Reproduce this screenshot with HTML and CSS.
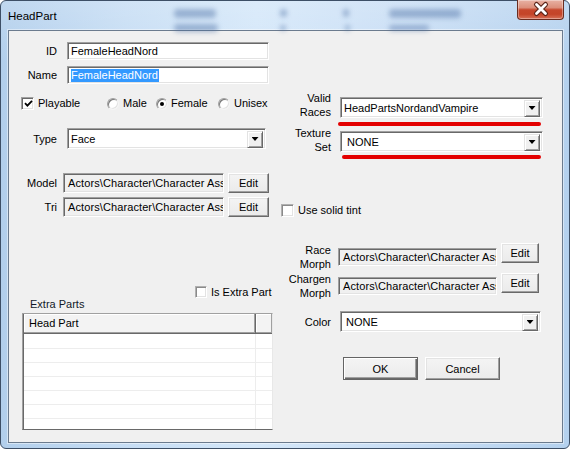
FILE: index.html
```html
<!DOCTYPE html>
<html>
<head>
<meta charset="utf-8">
<title>HeadPart</title>
<link rel="stylesheet" href="styles.css">
</head>
<body>
<div class="window">
  <div class="titlebar">
    <span class="title">HeadPart</span>
    <span class="smudge s1"></span>
    <span class="smudge s1b"></span>
    <span class="smudge s2"></span>
    <span class="smudge s2b"></span>
    <span class="smudge s3"></span>
    <span class="smudge s3b"></span>
    <span class="smudge s4"></span>
    <span class="smudge s4b"></span>
    <div class="close">
      <svg width="47" height="20" viewBox="0 0 47 20">
        <path d="M19.5 5.5 L28.5 14.5 M28.5 5.5 L19.5 14.5" stroke="#5a2418" stroke-width="5" stroke-linecap="round" fill="none"/>
        <path d="M19.5 5.5 L28.5 14.5 M28.5 5.5 L19.5 14.5" stroke="#ffffff" stroke-width="2.8" stroke-linecap="round" fill="none"/>
      </svg>
    </div>
  </div>
  <div class="client">
    <div class="band band-a">
      <div class="col-left">
        <div class="row r-id"><span class="lbl">ID</span><div class="field w-name">FemaleHeadNord</div></div>
        <div class="row r-name"><span class="lbl">Name</span><div class="field w-name"><span class="sel">FemaleHeadNord</span></div></div>
        <div class="row r-opts">
          <div class="opt o-play"><span class="chk"><svg width="9" height="9" viewBox="0 0 9 9"><path d="M1 4.2 L3.4 6.6 L8 1.8" stroke="#000" stroke-width="1.8" fill="none"/></svg></span>Playable</div>
          <div class="opt o-male"><span class="radio"></span>Male</div>
          <div class="opt o-female"><span class="radio on"></span>Female</div>
          <div class="opt o-unisex"><span class="radio"></span>Unisex</div>
        </div>
        <div class="row r-type"><span class="lbl">Type</span><div class="combo w-type"><span class="ctext">Face</span><span class="dd"></span></div></div>
      </div>
      <div class="col-right">
        <div class="row r-races"><span class="lbl2">Valid<br>Races</span><div class="combo w-races"><span class="ctext">HeadPartsNordandVampire</span><span class="dd"></span></div></div>
        <div class="redline rl1"></div>
        <div class="row r-tex"><span class="lbl2">Texture<br>Set</span><div class="combo w-races c-none"><span class="ctext">NONE</span><span class="dd"></span></div></div>
        <div class="redline rl2"></div>
      </div>
    </div>
    <div class="band band-b">
      <div class="row r-model"><span class="lbl lbl-m">Model</span><div class="field ro w-path"><span class="ptext">Actors\Character\Character Ass</span></div><button class="btn btn-edit">Edit</button></div>
      <div class="row r-tri"><span class="lbl lbl-m">Tri</span><div class="field ro w-path"><span class="ptext">Actors\Character\Character Ass</span></div><button class="btn btn-edit">Edit</button>
        <div class="opt o-tint"><span class="chk"></span>Use solid tint</div>
      </div>
    </div>
    <div class="band band-c">
      <div class="col-left">
        <div class="opt o-extra"><span class="chk"></span>Is Extra Part</div>
        <div class="extra-lbl">Extra Parts</div>
        <div class="list">
          <div class="list-head"><div class="hcol h1">Head Part</div><div class="hcol h2"></div></div>
          <div class="list-body"><div class="lc lc1"></div><div class="lc lc2"></div></div>
        </div>
      </div>
      <div class="col-right">
        <div class="row r-morph"><span class="lbl2 lbl-n">Race<br>Morph</span><div class="field ro w-morph"><span class="ptext">Actors\Character\Character Ass</span></div><button class="btn btn-sm">Edit</button></div>
        <div class="row r-morph r-charg"><span class="lbl2 lbl-n">Chargen<br>Morph</span><div class="field ro w-morph"><span class="ptext">Actors\Character\Character Ass</span></div><button class="btn btn-sm">Edit</button></div>
        <div class="row r-color"><span class="lbl2">Color</span><div class="combo w-color c-color"><span class="ctext">NONE</span><span class="dd"></span></div></div>
        <div class="row r-btns"><button class="btn btn-ok">OK</button><button class="btn btn-cancel">Cancel</button></div>
      </div>
    </div>
  </div>
</div>
</body>
</html>
```
FILE: styles.css
```css
* { box-sizing: border-box; }
html, body { margin: 0; padding: 0; width: 570px; height: 449px; overflow: hidden; }
body {
  font-family: "Liberation Sans", Arial, sans-serif;
  font-size: 11px;
  color: #000;
  background: #fff;
}

.window {
  width: 570px;
  height: 449px;
  display: flex;
  flex-direction: column;
  padding: 0 6px 5px 7px;
  border: 1px solid #3d4f66;
  border-radius: 6px;
  background:
    linear-gradient(180deg, rgba(255,255,255,0.18), rgba(255,255,255,0) 60px),
    linear-gradient(90deg, #b2cfec 0%, #c6ddf4 22%, #d4e7f9 45%, #c9def5 70%, #b4d1ee 100%);
}

.titlebar {
  position: relative;
  height: 29px;
  flex: none;
  display: flex;
  align-items: center;
}
.title { font-size: 11.5px; color: #000; position: relative; z-index: 2; }
.smudge {
  position: absolute;
  background: rgba(70, 105, 160, 0.42);
  filter: blur(2.5px);
  border-radius: 4px;
}
.s1 { left: 166px; top: 8px; width: 42px; height: 9px; }
.s1b { left: 166px; top: 23px; width: 44px; height: 8px; }
.s2 { left: 272px; top: 8px; width: 7px; height: 8px; }
.s2b { left: 272px; top: 24px; width: 6px; height: 6px; }
.s3 { left: 335px; top: 8px; width: 6px; height: 8px; }
.s3b { left: 337px; top: 24px; width: 5px; height: 6px; }
.s4 { left: 381px; top: 8px; width: 72px; height: 9px; }
.s4b { left: 381px; top: 24px; width: 40px; height: 6px; }

.close {
  position: absolute;
  right: -1px;
  top: -1px;
  width: 47px;
  height: 20px;
  border: 1px solid #6a2c1f;
  border-top: 0;
  border-radius: 0 0 4px 4px;
  background: linear-gradient(180deg, #e8b2a4 0%, #dc8f7b 40%, #c6472c 52%, #c44428 75%, #d77158 100%);
  box-shadow: inset 0 0 0 1px rgba(255,255,255,0.35);
}
.close svg { display: block; position: absolute; left: -1px; top: -1px; }

.client {
  flex: 1;
  border: 1px solid #6b7b8e;
  background: #f0f0f0;
  display: flex;
  flex-direction: column;
  box-shadow: 0 0 0 1px rgba(255,255,255,0.45);
}

.band { display: flex; align-items: flex-start; flex: none; }
.col-left { width: 275px; flex: none; display: flex; flex-direction: column; }
.col-right { width: 278px; flex: none; display: flex; flex-direction: column; }

.row { display: flex; align-items: center; flex: none; }

.lbl { width: 48px; text-align: right; margin-right: 10px; flex: none; }
.lbl-m { margin-right: 6px; }
.lbl2 { width: 47px; text-align: right; margin-right: 9px; line-height: 14px; flex: none; }
.lbl-n { margin-right: 7px; }

.field {
  height: 18px;
  background: #fff;
  border: 1px solid;
  border-color: #a0a0a0 #ffffff #ffffff #a0a0a0;
  box-shadow: inset 1px 1px 0 #696969, inset -1px -1px 0 #e3e3e3;
  padding-left: 3px;
  display: flex;
  align-items: center;
  white-space: nowrap;
  overflow: hidden;
  flex: none;
}
.field.ro { background: #f0f0f0; padding-left: 4px; height: 20px; }
.ptext { letter-spacing: 0.1px; }
.sel { background: #3399ff; color: #fff; line-height: 13px; padding: 0 1px 0 0; }

.w-name { width: 202px; }
.w-type { width: 199px; }
.w-races { width: 203px; }
.w-path { width: 161px; }
.w-morph { width: 159px; height: 18px !important; }
.w-color { width: 201px; }

.r-id { margin-top: 11px; height: 18px; }
.r-name { margin-top: 6px; height: 18px; }
.r-opts { margin-top: 13px; height: 13px; padding-left: 12px; }
.r-type { margin-top: 18px; height: 21px; }

.opt { display: flex; align-items: center; line-height: 13px; white-space: nowrap; flex: none; }
.o-play { width: 86px; }
.o-male { width: 49px; }
.o-female { width: 62px; }
.o-female .radio { margin-right: 3px; }

.chk {
  width: 13px;
  height: 13px;
  margin-right: 4px;
  background: #fff;
  border: 1px solid;
  border-color: #a0a0a0 #ffffff #ffffff #a0a0a0;
  box-shadow: inset 1px 1px 0 #696969, inset -1px -1px 0 #e3e3e3;
  display: flex;
  align-items: center;
  justify-content: center;
  flex: none;
}
.chk svg { display: block; margin-left: 1px; }
.radio {
  width: 12px;
  height: 12px;
  margin-right: 4px;
  border-radius: 50%;
  background: #fff;
  border: 1px solid;
  border-color: #a0a0a0 #f4f4f4 #f4f4f4 #a0a0a0;
  box-shadow: inset 1px 1px 0 #7a7a7a, inset -1px -1px 0 #e3e3e3;
  display: flex;
  align-items: center;
  justify-content: center;
  flex: none;
}
.radio.on::after {
  content: "";
  width: 4px;
  height: 4px;
  border-radius: 50%;
  background: #000;
}

.combo {
  height: 21px;
  background: #fff;
  border: 1px solid;
  border-color: #a0a0a0 #ffffff #ffffff #a0a0a0;
  box-shadow: inset 1px 1px 0 #696969, inset -1px -1px 0 #e3e3e3;
  padding: 0 2px 0 2px;
  display: flex;
  align-items: center;
  flex: none;
}
.ctext { padding-left: 1px; white-space: nowrap; }
.c-none .ctext { padding-left: 4px; }
.c-color .ctext { padding-left: 3px; }
.dd {
  margin-left: auto;
  width: 16px;
  height: 17px;
  margin-top: 1px;
  background: #f0f0f0;
  border: 1px solid;
  border-color: #e3e3e3 #696969 #696969 #e3e3e3;
  box-shadow: inset 1px 1px 0 #ffffff, inset -1px -1px 0 #a0a0a0;
  display: flex;
  align-items: center;
  justify-content: center;
  flex: none;
}
.dd::after {
  content: "";
  width: 7px;
  height: 4px;
  background: #000;
  clip-path: polygon(0 0, 100% 0, 50% 100%);
}

.r-races { margin-top: 60px; height: 28px; align-items: flex-start; }
.r-races .combo { margin-top: 6px; }
.r-tex { margin-top: 0; height: 28px; align-items: flex-start; }
.r-tex .combo { margin-top: 5px; }

.redline { height: 4px; border-radius: 2px; background: #e30000; flex: none; }
.rl1 { margin: 3px 0 0 54px; width: 203px; }
.rl2 { margin: 1px 0 0 58px; width: 199px; }

.band-b { flex-direction: column; margin-top: 14px; }
.r-model { height: 20px; }
.r-tri { margin-top: 4px; height: 20px; align-items: flex-start; }
.r-tri .lbl { align-self: center; }

.btn {
  font: inherit;
  color: #000;
  padding: 0;
  margin: 0;
  background: linear-gradient(180deg, #f4f4f4, #ebebeb);
  border: 1px solid;
  border-color: #ffffff #696969 #696969 #ffffff;
  box-shadow: inset -1px -1px 0 #a0a0a0, inset 1px 1px 0 #e3e3e3;
  flex: none;
}
.btn-edit { width: 41px; height: 20px; margin-left: 4px; }
.o-tint { margin-left: 12px; margin-top: 7px; }

.band-c { margin-top: 0; }
.o-extra { margin-top: 69px; margin-left: 186px; width: 78px; height: 12px; overflow: hidden; }
.o-extra .chk, .o-tint .chk { border-color: #b0b0b0 #ffffff #ffffff #b0b0b0; box-shadow: inset 1px 1px 0 #8a8a8a, inset -1px -1px 0 #e3e3e3; }
.o-extra .chk { height: 12px; width: 12px; margin-right: 4px; }
.extra-lbl { margin-left: 21px; line-height: 13px; color: #101828; }

.list {
  margin: 2px 0 0 13px;
  width: 251px;
  height: 117px;
  background: #fff;
  border-style: solid;
  border-width: 1px 1px 1px 1px;
  border-color: #a0a0a0 #e8e8e8 #696969 #a0a0a0;
  box-shadow: inset 1px 0 0 #696969;
  display: flex;
  flex-direction: column;
  overflow: hidden;
  flex: none;
}
.list-head { display: flex; height: 20px; flex: none; }
.hcol {
  height: 20px;
  background: #f3f3f3;
  border-right: 1px solid #696969;
  border-bottom: 1px solid #696969;
  box-shadow: inset -1px -1px 0 #a0a0a0, inset 1px 1px 0 #ffffff;
  padding: 3px 0 0 5px;
  white-space: nowrap;
}
.h1 { width: 232px; margin-left: 1px; }
.h2 { flex: 1; border-right: 0; }
.list-body { flex: 1; display: flex; }
.lc {
  height: 100%;
  background: repeating-linear-gradient(180deg, #ffffff 0 13px, #ededed 13px 14px);
  background-position: 0 1px;
}
.lc1 { width: 232px; border-right: 1px solid #ededed; margin-left: 1px; }
.lc2 { flex: 1; }

.r-morph { margin-top: 26px; height: 28px; align-items: flex-start; }
.r-morph .field { margin-top: 5px; }
.r-charg { margin-top: 1px; }
.r-charg .btn-sm { margin-top: 1px; }
.btn-sm { width: 38px; height: 20px; margin-left: 4px; }
.r-color { margin-top: 11px; height: 21px; }
.r-btns { margin-top: 25px; height: 23px; padding-left: 59px; }
.btn-ok, .btn-cancel { width: 75px; height: 23px; }
.btn-ok {
  border-color: #646464;
  box-shadow: inset 1px 1px 0 #ffffff, inset -1px -1px 0 #696969, inset -2px -2px 0 #a0a0a0;
}
.btn-cancel { margin-left: 7px; }
```
